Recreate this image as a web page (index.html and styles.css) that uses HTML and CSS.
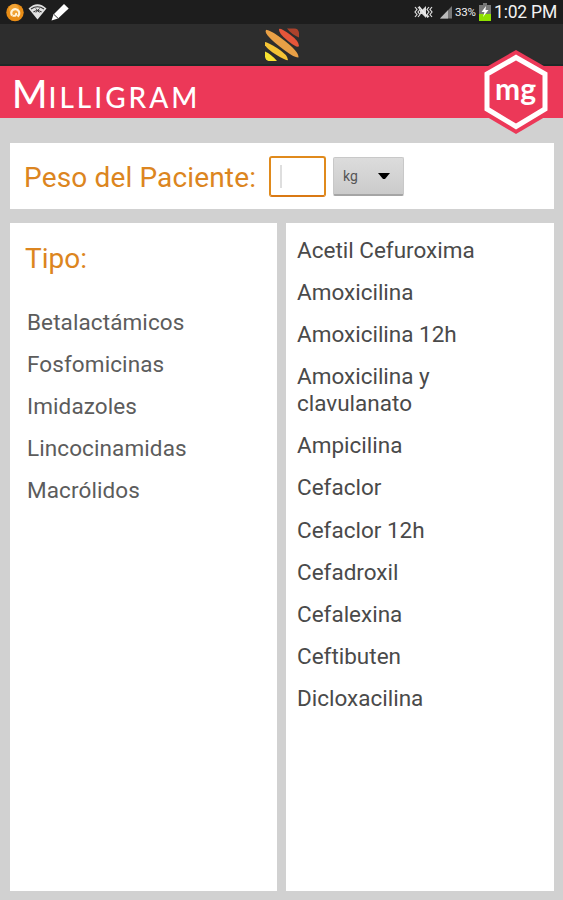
FILE: index.html
```html
<!DOCTYPE html>
<html lang="es">
<head>
    <meta charset="UTF-8">
    <meta name="viewport" content="width=device-width, initial-scale=1.0">
    <title>Milligram</title>
    <link rel="stylesheet" href="styles.css">
</head>
<body>
    <div class="status-bar">
        <svg class="status-left" width="72" height="24" viewBox="0 0 72 24">
            <circle cx="15" cy="12.5" r="8.7" fill="#e98d16"/>
            <circle cx="14" cy="9" r="5" fill="#f8b44c" opacity=".6"/>
            <path d="M12 15.5a4 4 0 1 1 5.5 1M12.5 15.5c3 .8 4-.5 3.6-2.5" fill="none" stroke="#fff3d8" stroke-width="2.2"/>
            <path d="M28.5 8.5Q37.500 0 46.500 8.500L37.500 19.500Z" fill="#e2e2e2"/>
            <path d="M31 9Q37.500 4.500 44 9M33.500 12Q37.500 9 41.500 12" fill="none" stroke="#333" stroke-width="1.1"/>
            <path d="M35.800 8.500l3.600 4M39.500 8.500l-3.600 4" stroke="#333" stroke-width="1"/>
            <path d="M51.500 20.500l2-6L64 4l4.700 4.500L58 18.500Z" fill="#fff"/>
            <path d="M54 14.500l4 3.800" stroke="#333" stroke-width="1"/>
        </svg>
        <div class="status-right">
            <svg width="38" height="24" viewBox="0 0 38 24">
                <path d="M1 7l2 2.500-2 2.500 2 2.500-2 2.500M4 7l2 2.500-2 2.500 2 2.500-2 2.500M18 7l-2 2.500 2 2.500-2 2.500 2 2.500M15 7l-2 2.500 2 2.500-2 2.500 2 2.500" fill="none" stroke="#ddd" stroke-width="1.200"/>
                <path d="M6 10h2l4-4v12l-4-4H6Z" fill="#ddd"/>
                <path d="M5 6.500l9 11" stroke="#eee" stroke-width="1.300"/>
                <path d="M26 18.500L38 6v12.500Z" fill="#777"/>
                <path d="M26 18.500L34 10.200v8.300Z" fill="#bbb"/>
            </svg>
            <span class="battery-text">33%</span>
            <svg class="battery" width="12" height="18" viewBox="0 0 12 18">
                <path d="M4 0h4v2h4v16H0V2h4Z" fill="#777"/>
                <path d="M0 11h12v7H0Z" fill="#8ee000"/>
                <path d="M7 3L2.500 9h3L4 14l5.500-7H6.500Z" fill="#fff"/>
            </svg>
            <span class="clock">1:02 PM</span>
        </div>
    </div>

    <div class="action-bar">
        <svg width="36" height="36" viewBox="0 0 36 36">
            <defs><clipPath id="stripes"><rect x="1" y="1" width="34" height="33.500" rx="5"/></clipPath></defs>
            <g clip-path="url(#stripes)">
                <path d="M23 1.500h8q4 0 4 4v5Q27 7 23 1.500Z" fill="#ac422c"/>
                <path d="M15 2Q14 6 24 14T35 19Q35 14 26 7.500T15 2Z" fill="#e6563a"/>
                <path d="M1.500 2.500Q0 7 15 19T34.500 30.500Q35 25 21 14T1.500 2.500Z" fill="#e9a046"/>
                <path d="M0 15Q0 20 11 27T24 33Q24 28 13 21T0 15Z" fill="#f5c435"/>
                <path d="M1 24.500Q7 27 13 34H5q-4 0-4-4Z" fill="#f8e331"/>
            </g>
        </svg>
    </div>

    <header class="brand">
        <h1 class="brand-name">M<span>illigram</span></h1>
        <svg class="brand-logo" width="70" height="84" viewBox="0 0 70 84">
            <path d="M35 0L69 19.500V64L35 84L1 64V19.500Z" fill="#ec3858"/>
            <path d="M35 7.500L64 24V59L35 76.500L6 59V24Z" fill="none" stroke="#fff" stroke-width="5"/>
            <text x="34.500" y="49.500" text-anchor="middle" class="logo-text">mg</text>
        </svg>
    </header>

    <main>
        <section class="card weight">
            <label class="heading" for="peso">Peso del Paciente:</label>
            <div class="field" id="peso"><i class="caret"></i></div>
            <div class="unit">
                <span>kg</span>
                <svg width="12" height="7" viewBox="0 0 12 7"><path d="M0 0h12L7 6H5Z" fill="#000"/></svg>
            </div>
        </section>

        <div class="columns">
            <section class="card types">
                <h2 class="heading">Tipo:</h2>
                <ul class="list">
                    <li>Betalactámicos</li>
                    <li>Fosfomicinas</li>
                    <li>Imidazoles</li>
                    <li>Lincocinamidas</li>
                    <li>Macrólidos</li>
                </ul>
            </section>
            <section class="card drugs">
                <ul class="list">
                    <li>Acetil Cefuroxima</li>
                    <li>Amoxicilina</li>
                    <li>Amoxicilina 12h</li>
                    <li>Amoxicilina y<br>clavulanato</li>
                    <li>Ampicilina</li>
                    <li>Cefaclor</li>
                    <li>Cefaclor 12h</li>
                    <li>Cefadroxil</li>
                    <li>Cefalexina</li>
                    <li>Ceftibuten</li>
                    <li>Dicloxacilina</li>
                </ul>
            </section>
        </div>
    </main>
</body>
</html>
```
FILE: styles.css
```css
* { box-sizing: border-box; }
body { margin: 0; height: 900px; display: flex; flex-direction: column; background: #d1d1d1; font-family: Roboto, "Liberation Sans", sans-serif; overflow: hidden; }
svg { display: block; flex: none; }
.status-bar { height: 24px; display: flex; justify-content: space-between; background: #1d1d1d; color: #f2f2f2; }
.status-right { display: flex; align-items: center; padding-right: 6px; }
.battery-text { width: 24px; margin-left: 3px; font-size: 11.5px; letter-spacing: -0.2px; }
.clock { width: 63px; margin-left: 3px; font-size: 17.5px; line-height: 24px; white-space: nowrap; letter-spacing: -0.2px; }
.action-bar { height: 42px; display: flex; justify-content: center; padding-top: 3px; background: #2d2d2d; border-bottom: 2px solid #1e2927; }
.brand { position: relative; height: 52px; background: #ec3858; }
.brand-name { margin: 0; padding-left: 12px; font: 500 38px/54px Lato, sans-serif; color: #fff; }
.brand-name span { font-size: 28px; text-transform: uppercase; letter-spacing: 3px; margin-left: 1px; }
.brand-logo { position: absolute; top: -16px; right: 12px; }
.logo-text { font: 700 30px Lato, sans-serif; fill: #fff; }
main { flex: 1; display: flex; flex-direction: column; gap: 14px; padding: 25px 9px 9px 10px; }
.card { background: #fff; }
.weight { height: 66px; display: flex; align-items: center; padding-left: 14px; }
.heading { margin: 0; font-size: 28px; font-weight: 400; line-height: 34px; color: #dc8520; }
.weight .heading { width: 245px; padding-top: 3px; white-space: nowrap; letter-spacing: 0.15px; }
.field { width: 57px; height: 41px; padding: 7px 9px; border: 2px solid #e08a1c; border-bottom-color: #d97914; border-radius: 3px; }
.caret { display: block; width: 2px; height: 23px; background: #dedede; }
.unit { width: 71px; height: 39px; margin-left: 7px; display: flex; align-items: center; justify-content: space-between; padding: 1px 13px 0 9px; background: linear-gradient(#dcdcdc, #cbcbcb); border: 1px solid #c8c8c8; border-bottom: 2px solid #a5a5a5; border-radius: 2px; font-size: 14px; color: #555; }
.columns { flex: 1; display: grid; grid-template-columns: 267px 268px; gap: 9px; }
.types { padding: 19px 0 0 15px; }
.types .list { padding: 33px 0 0 2px; color: #5c5c5c; letter-spacing: 0.1px; }
.drugs { padding: 14px 0 0 11px; }
.list { margin: 0; padding: 0; list-style: none; display: flex; flex-direction: column; gap: 15.1px; font-size: 22.5px; line-height: 27px; color: #4a4a4a; }
```
